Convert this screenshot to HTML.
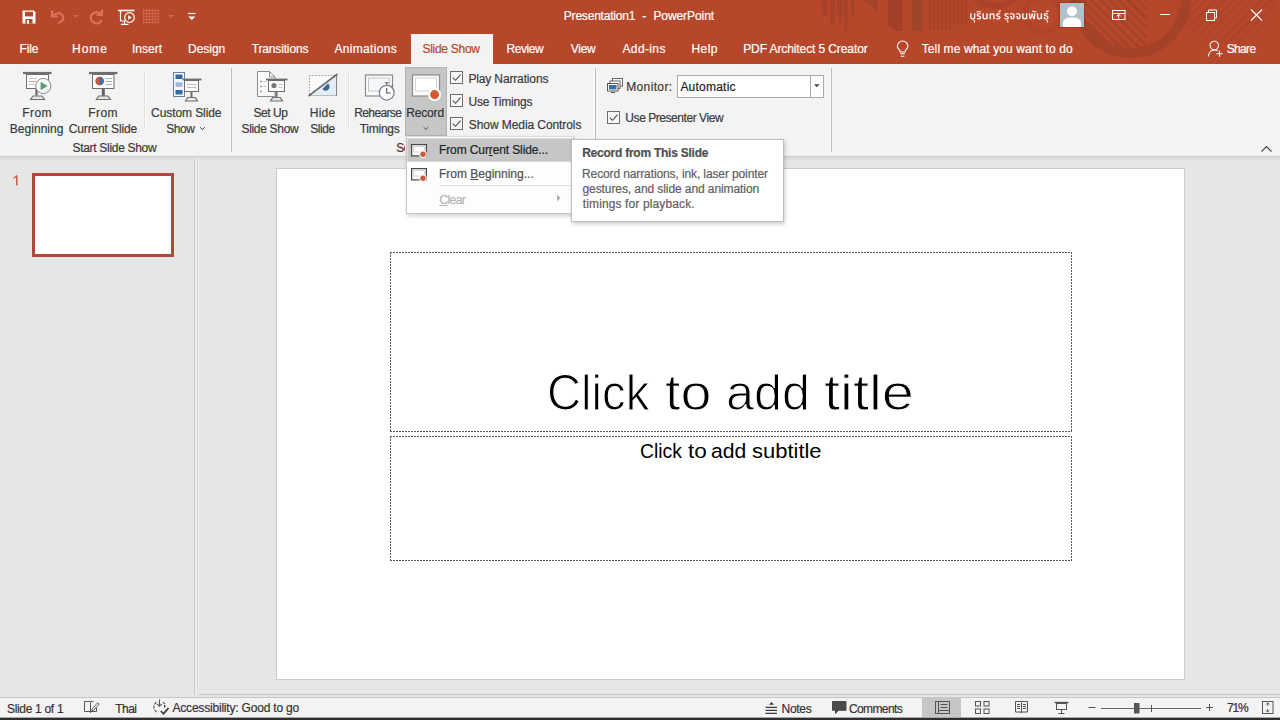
<!DOCTYPE html>
<html><head><meta charset="utf-8"><title>PowerPoint</title>
<style>
html,body{margin:0;padding:0;}
body{width:1280px;height:720px;overflow:hidden;position:relative;background:#e6e6e6;font-family:"Liberation Sans",sans-serif;}
.t{position:absolute;white-space:nowrap;margin:0;padding:0;-webkit-text-stroke:0.2px currentColor;}
.r{position:absolute;}
svg{position:absolute;overflow:visible;}
u{text-decoration:underline;text-underline-offset:1px;}
</style></head>
<body>
<div class="r" style="left:0px;top:0px;width:1280px;height:64px;background:#b7472a;"></div>
<svg style="left:0;top:0" width="1280" height="64" viewBox="0 0 1280 64">
<defs>
<clipPath id="cpA"><rect x="0" y="0" width="1280" height="64"/></clipPath>
<pattern id="dg1" width="6.500" height="6.500" patternUnits="userSpaceOnUse" patternTransform="rotate(45)"><rect x="0" y="0" width="6.500" height="3.200" fill="#a3402a"/></pattern>
<pattern id="dg2" width="6.500" height="6.500" patternUnits="userSpaceOnUse" patternTransform="rotate(-45)"><rect x="0" y="0" width="6.500" height="3.200" fill="#a3402a"/></pattern>
<clipPath id="cpC1"><circle cx="1131" cy="-2" r="50"/></clipPath>
<clipPath id="cpC2"><circle cx="1226" cy="-8" r="52"/></clipPath>
</defs>
<g clip-path="url(#cpA)" fill="#a3402a">
<g opacity="0.800">
<rect x="822" y="0" width="5" height="15"/><rect x="830.500" y="0" width="4" height="24"/><rect x="837" y="0" width="5.500" height="15"/><rect x="839" y="15" width="2" height="9"/><rect x="844" y="0" width="3.500" height="31"/><rect x="851" y="0" width="3" height="15"/>
<polygon points="864,0 878,0 878,12"/>
<polygon points="888,0 902.500,0 902.500,31 896,31 888,25" fill="#9c3e28"/>
<rect x="912" y="0" width="11" height="31" fill="#98452a"/>
<rect x="929" y="0" width="2" height="30"/><rect x="933" y="0" width="2" height="30"/><rect x="937" y="0" width="2" height="30"/><rect x="941" y="0" width="2" height="30"/><rect x="945" y="0" width="2" height="30"/><rect x="949" y="0" width="2" height="30"/><rect x="953" y="0" width="2" height="24"/><rect x="957" y="0" width="2" height="24"/><rect x="961" y="0" width="2" height="24"/><rect x="965" y="0" width="2" height="24"/>
</g>
<circle cx="995" cy="-24" r="30" fill="none" stroke="#a3402a" stroke-width="6" opacity="0.600"/>
<circle cx="1043" cy="14" r="18" fill="none" stroke="#a3402a" stroke-width="6" opacity="0.350"/>
<circle cx="1131" cy="-2" r="55" fill="none" stroke="#9f4129" stroke-width="10" opacity="0.800"/>
<rect x="1080" y="-52" width="67" height="104" fill="url(#dg1)" clip-path="url(#cpC1)" opacity="0.800"/>
<rect x="1174" y="-60" width="104" height="110" fill="url(#dg2)" clip-path="url(#cpC2)" opacity="0.450"/>
</g>
</svg>
<div class="t" style="left:563.82px;top:10px;font-size:12.0px;line-height:12.0px;letter-spacing:-0.207px;color:#fff;">Presentation1</div>
<div class="t" style="left:642.27px;top:10px;font-size:12.0px;line-height:12.0px;letter-spacing:1.070px;color:#fff;">-</div>
<div class="t" style="left:653.42px;top:10px;font-size:12.0px;line-height:12.0px;letter-spacing:-0.077px;color:#fff;">PowerPoint</div>
<svg style="left:0;top:0" width="220" height="32" viewBox="0 0 220 32" fill="none">
<!-- save -->
<path d="M22.5 10.5h11.3l1.7 1.7v11.3h-13z" fill="#fff"/>
<rect x="25" y="11.8" width="8" height="4.6" fill="#b7472a"/>
<rect x="25.5" y="19" width="7" height="4.6" fill="#b7472a"/><rect x="27" y="20" width="2" height="3.6" fill="#fff"/>
<!-- undo (dim) -->
<g stroke="#d9735a" stroke-width="2.200" fill="none" stroke-linejoin="round">
<path d="M52 10.500v6h6" />
<path d="M52.500 16c3-3.400 7.300-3.600 9.500-1.200c2.500 2.800 1.200 6.700-3.500 8.200"/>
</g>
<path d="M72.800 15h5.400l-2.700 3z" fill="#cf6a50"/>
<!-- redo (dim) -->
<g stroke="#d9735a" stroke-width="2.200" fill="none" stroke-linejoin="round">
<path d="M102 9.500v5.500h-5.500"/>
<path d="M101.500 15c-2.200-3.400-7-3.800-9.500-0.700c-2.400 3-1.300 7.300 2.300 8.600c2.900 1 5.800-0.200 7.200-2.900"/>
</g>
<!-- start from beginning -->
<g stroke="#fff" stroke-width="1.2" fill="none">
<path d="M118 10.500h16.500" stroke-width="1.600"/>
<path d="M120.500 11v10h4.500"/>
<path d="M124.500 21v3M121 24.300h7.500" />
<circle cx="129.500" cy="17.500" r="4.800" fill="#b7472a"/>
<path d="M128.200 15.300l3.600 2.200l-3.600 2.200z" fill="#fff" stroke="none"/>
</g>
<!-- grid icon dim -->
<g stroke="#d0694f" stroke-width="1.200" opacity="0.900">
<path d="M143.500 9v14.500M146.500 9v14.500M149.500 9v14.500M152.500 9v14.500M155.500 9v14.500M158.500 9v14.500"/>
<path d="M143 10.500h16M143 13.500h16M143 16.500h16M143 19.500h16M143 22.500h16"/>
</g>
<path d="M168.500 15h5.400l-2.700 3z" fill="#cf6a50"/>
<!-- customize QAT -->
<path d="M188 13.500h7.500" stroke="#fff" stroke-width="1.200"/>
<path d="M188.300 16.500h7l-3.500 3.500z" fill="#fff"/>
</svg>
<svg style="left:0;top:0" width="1280" height="32" viewBox="0 0 1280 32"><path fill="#fff" fill-rule="evenodd" d="M1046.27 20.28L1046.32 21.04L1046.65 20.98L1046.82 21.28L1046.82 22.39L1047.96 22.39L1047.96 20.87L1047.85 20.46L1047.47 20.16L1046.60 20.16ZM1006.62 20.28L1006.73 21.04L1007.01 20.98L1007.17 21.16L1007.17 22.39L1008.32 22.39L1008.32 20.63L1008.15 20.34L1007.83 20.16L1006.95 20.16ZM973.37 20.28L973.42 20.98L973.75 20.98L973.91 21.22L973.91 22.39L975.06 22.39L975.06 20.75L974.95 20.46L974.57 20.16L973.69 20.16ZM1036.88 13.36L1036.88 17.46L1037.04 18.29L1037.37 18.87L1038.02 19.34L1038.52 19.46L1039.33 19.46L1040.15 19.17L1040.64 18.70L1040.70 18.52L1040.92 18.46L1041.03 19.34L1042.06 19.34L1042.06 13.36L1040.70 13.36L1040.64 17.17L1040.32 17.82L1039.61 18.23L1038.84 18.17L1038.57 17.99L1038.30 17.58L1038.24 13.36ZM1028.69 13.36L1029.72 19.34L1031.03 19.28L1031.96 16.12L1032.07 15.29L1032.18 15.18L1032.40 16.41L1033.27 19.34L1034.64 19.28L1035.62 13.36L1034.31 13.42L1033.76 17.41L1033.66 17.29L1033.49 16.41L1032.62 13.36L1031.69 13.36L1030.82 16.41L1030.65 17.29L1030.54 17.41L1030.00 13.36ZM1022.13 13.36L1022.13 17.46L1022.30 18.29L1022.62 18.87L1023.28 19.34L1023.77 19.46L1024.59 19.46L1025.41 19.17L1025.90 18.70L1025.96 18.52L1026.17 18.46L1026.28 19.34L1027.32 19.34L1027.32 13.36L1025.96 13.36L1025.90 17.17L1025.57 17.82L1024.86 18.23L1024.10 18.17L1023.83 17.99L1023.55 17.58L1023.50 13.36ZM982.49 13.36L982.49 17.46L982.65 18.29L982.98 18.87L983.63 19.34L984.13 19.46L984.94 19.46L985.76 19.17L986.25 18.70L986.31 18.52L986.53 18.46L986.64 19.34L987.67 19.34L987.67 13.36L986.31 13.36L986.25 17.17L985.93 17.82L985.22 18.23L984.45 18.17L984.18 17.99L983.91 17.58L983.85 13.36ZM970.20 13.30L970.20 17.46L970.31 17.99L970.58 18.58L971.35 19.22L972.28 19.46L973.64 19.40L974.62 18.93L975.11 18.23L975.33 17.29L975.33 13.30L973.97 13.30L973.97 17.41L973.86 17.76L973.53 18.11L973.15 18.29L972.17 18.23L971.73 17.88L971.57 17.52L971.51 13.30ZM994.01 13.65L993.30 13.30L992.21 13.24L991.28 13.59L990.79 14.24L990.62 14.24L990.46 13.36L989.48 13.36L989.48 19.34L990.84 19.34L990.84 15.76L991.17 14.94L991.55 14.59L991.88 14.47L992.53 14.47L992.92 14.65L993.14 14.88L993.30 15.29L993.30 19.34L994.66 19.34L994.66 15.24L994.50 14.36ZM1044.14 13.59L1043.76 14.00L1043.59 14.47L1043.59 15.06L1043.87 15.65L1044.63 16.12L1046.92 16.82L1047.25 17.29L1047.25 17.76L1046.92 18.23L1046.60 18.40L1046.00 18.46L1045.01 18.29L1044.96 16.70L1043.81 16.70L1043.81 19.05L1045.01 19.40L1046.43 19.46L1047.20 19.34L1047.91 18.99L1048.24 18.64L1048.51 17.93L1048.51 17.05L1048.29 16.47L1047.53 15.82L1045.29 15.12L1044.90 14.71L1045.07 14.41L1045.56 14.24L1046.98 14.30L1048.07 14.65L1048.02 13.48L1046.71 13.18L1045.51 13.18L1044.80 13.30ZM1015.80 13.65L1015.80 14.82L1017.05 14.36L1018.20 14.36L1018.75 14.59L1019.07 14.94L1019.35 15.70L1019.35 16.94L1019.24 17.41L1018.80 18.05L1018.42 18.23L1017.93 18.17L1017.93 15.88L1016.02 15.88L1016.02 16.76L1016.73 16.82L1016.73 19.34L1018.47 19.34L1019.24 19.17L1019.84 18.81L1020.22 18.40L1020.49 17.88L1020.71 16.88L1020.66 15.29L1020.49 14.71L1020.06 13.95L1019.29 13.42L1018.31 13.18L1016.94 13.24ZM1009.79 13.65L1009.79 14.88L1010.12 14.65L1010.77 14.41L1012.19 14.36L1012.74 14.59L1013.12 15.00L1013.34 15.65L1013.40 16.47L1013.29 17.29L1013.07 17.76L1012.79 18.05L1012.41 18.23L1011.98 18.17L1011.98 15.88L1010.06 15.88L1010.06 16.76L1010.72 16.82L1010.72 19.34L1012.85 19.28L1013.50 19.05L1013.83 18.81L1014.27 18.34L1014.54 17.76L1014.71 17.00L1014.65 15.24L1014.49 14.65L1014.16 14.06L1013.45 13.48L1012.30 13.18L1010.94 13.24ZM1005.42 13.36L1004.82 13.71L1004.49 14.18L1004.38 14.53L1004.38 15.24L1004.49 15.59L1004.99 16.17L1007.33 17.23L1007.55 17.52L1007.55 17.88L1007.17 18.23L1006.51 18.34L1005.64 18.23L1004.60 17.82L1004.28 18.81L1004.33 18.99L1005.31 19.34L1006.13 19.46L1007.06 19.46L1007.93 19.22L1008.37 18.93L1008.75 18.40L1008.92 17.52L1008.70 16.76L1008.10 16.17L1005.97 15.29L1005.70 15.00L1005.70 14.71L1005.97 14.41L1006.35 14.30L1007.33 14.30L1008.54 14.65L1008.54 13.53L1008.15 13.36L1007.22 13.18L1006.24 13.18ZM996.96 13.42L996.63 13.59L996.25 14.00L996.08 14.36L996.03 15.18L996.25 15.76L996.74 16.23L998.98 17.23L999.20 17.46L999.20 17.93L998.71 18.29L998.16 18.34L997.56 18.29L996.25 17.88L995.98 18.99L996.96 19.34L997.78 19.46L998.71 19.46L999.47 19.28L999.96 18.99L1000.45 18.29L1000.56 17.35L1000.40 16.82L999.74 16.17L997.61 15.29L997.40 15.06L997.34 14.77L997.61 14.41L998.00 14.30L998.98 14.30L1000.18 14.65L1000.18 13.53L998.92 13.18L997.89 13.18ZM977.63 13.42L977.30 13.59L976.92 14.00L976.75 14.36L976.70 15.18L976.92 15.76L977.41 16.23L979.65 17.23L979.87 17.46L979.87 17.93L979.37 18.29L978.83 18.34L978.23 18.29L976.92 17.88L976.64 18.99L977.63 19.34L978.45 19.46L979.37 19.46L980.14 19.28L980.63 18.99L981.12 18.29L981.23 17.35L981.07 16.82L980.41 16.17L978.28 15.29L978.06 15.06L978.01 14.77L978.28 14.41L978.66 14.30L979.65 14.30L980.85 14.65L980.85 13.53L979.59 13.18L978.56 13.18ZM976.26 11.66L976.26 12.24L981.07 12.24L981.07 11.19L977.19 11.19ZM1048.95 10.60L1047.25 10.60L1046.54 10.84L1046.21 11.36L1046.21 12.07L1046.38 12.54L1047.42 12.30L1047.36 11.89L1047.63 11.60L1048.95 11.60ZM1001.00 10.60L999.31 10.60L998.71 10.78L998.38 11.13L998.27 11.72L998.49 12.54L999.52 12.24L999.47 11.83L999.74 11.60L1001.05 11.60ZM1032.51 10.60L1032.40 11.13L1032.45 11.54L1032.73 11.95L1033.11 12.19L1036.44 12.24L1036.44 11.31L1033.93 11.31L1033.55 11.01L1033.60 10.60L1032.67 10.43Z"/></svg>
<div class="r" style="left:1059px;top:2px;width:26px;height:26px;background:rgba(120,40,20,0.350);"></div>
<div class="r" style="left:1060px;top:3px;width:24px;height:24px;background:#b0c1cb;"></div>
<svg style="left:1060px;top:3px" width="24" height="24" viewBox="0 0 24 24"><circle cx="12" cy="8.300" r="5" fill="#fff"/><path d="M3 24v-4c0-3.800 3-5.600 9-5.600s9 1.800 9 5.600v4z" fill="#fff"/></svg>
<svg style="left:1100px;top:0" width="180" height="32" viewBox="1100 0 180 32" fill="none" stroke="#fff" stroke-width="1">
<rect x="1112.500" y="10.500" width="12.500" height="9"/><path d="M1112.500 13.500h12.500"/><path d="M1118.700 18.500v-4M1116.700 16.300l2-2l2 2"/>
<path d="M1160 14.500h10"/>
<rect x="1206.500" y="12.500" width="8" height="8"/><path d="M1208.500 12.500v-2.500h8v8h-2"/>
<path d="M1251 9.500l11 11M1262 9.500l-11 11" stroke-width="1.100"/>
</svg>
<div class="t" style="left:19.52px;top:43px;font-size:12.0px;line-height:12.0px;letter-spacing:-0.106px;color:#fff;">File</div>
<div class="t" style="left:72.02px;top:43px;font-size:12.0px;line-height:12.0px;letter-spacing:1.003px;color:#fff;">Home</div>
<div class="t" style="left:131.89px;top:43px;font-size:12.0px;line-height:12.0px;letter-spacing:0.037px;color:#fff;">Insert</div>
<div class="t" style="left:188.02px;top:43px;font-size:12.0px;line-height:12.0px;letter-spacing:-0.018px;color:#fff;">Design</div>
<div class="t" style="left:251.73px;top:43px;font-size:12.0px;line-height:12.0px;letter-spacing:-0.154px;color:#fff;">Transitions</div>
<div class="t" style="left:334.48px;top:43px;font-size:12.0px;line-height:12.0px;letter-spacing:0.311px;color:#fff;">Animations</div>
<div class="r" style="left:411px;top:34px;width:82px;height:30px;background:#f3f3f3;"></div>
<div class="t" style="left:422.46px;top:43px;font-size:12.0px;line-height:12.0px;letter-spacing:-0.280px;color:#b7472a;">Slide Show</div>
<div class="t" style="left:506.52px;top:43px;font-size:12.0px;line-height:12.0px;letter-spacing:-0.418px;color:#fff;">Review</div>
<div class="t" style="left:570.75px;top:43px;font-size:12.0px;line-height:12.0px;letter-spacing:-0.257px;color:#fff;">View</div>
<div class="t" style="left:622.48px;top:43px;font-size:12.0px;line-height:12.0px;letter-spacing:0.378px;color:#fff;">Add-ins</div>
<div class="t" style="left:691.52px;top:43px;font-size:12.0px;line-height:12.0px;letter-spacing:0.436px;color:#fff;">Help</div>
<div class="t" style="left:743.22px;top:43px;font-size:12.0px;line-height:12.0px;letter-spacing:-0.101px;color:#fff;">PDF Architect 5 Creator</div>
<div class="t" style="left:921.73px;top:43px;font-size:12.0px;line-height:12.0px;letter-spacing:0.111px;color:#fff;">Tell me what you want to do</div>
<div class="t" style="left:1226.76px;top:43px;font-size:12.0px;line-height:12.0px;letter-spacing:-0.661px;color:#fff;">Share</div>
<svg style="left:890px;top:32px" width="40" height="32" viewBox="890 32 40 32" fill="none" stroke="#fff" stroke-width="1.100">
<path d="M900.300 52c0-2.200-3-3-3-5.700a5.300 5.300 0 0 1 10.600 0c0 2.700-3 3.500-3 5.700z"/>
<path d="M900.300 53.800h4.600M900.800 56.300h3.600"/>
</svg>
<svg style="left:1200px;top:32px" width="30" height="32" viewBox="1200 32 30 32" fill="none" stroke="#fff" stroke-width="1.100">
<circle cx="1214.300" cy="45.400" r="4.200"/>
<path d="M1208.400 56.500c0.200-3.800 2.600-6.600 6-6.600c1.300 0 2.400 0.300 3.400 0.900"/>
<path d="M1219.500 50.800v6M1216.500 53.800h6"/>
</svg>
<div class="r" style="left:0px;top:64px;width:1280px;height:92px;background:#f3f3f3;"></div>
<div class="r" style="left:0px;top:155px;width:1280px;height:1px;background:#ececec;"></div>
<div class="r" style="left:0px;top:156px;width:1280px;height:2px;background:#d5d5d5;"></div>
<div class="r" style="left:0px;top:158px;width:1280px;height:1px;background:#e3e3e3;"></div>
<div class="r" style="left:144px;top:72px;width:1px;height:56px;background:#e0e0e0;"></div>
<div class="r" style="left:145px;top:72px;width:1px;height:56px;background:#fbfbfb;"></div>
<div class="r" style="left:348px;top:72px;width:1px;height:56px;background:#e0e0e0;"></div>
<div class="r" style="left:349px;top:72px;width:1px;height:56px;background:#fbfbfb;"></div>
<div class="r" style="left:230px;top:68px;width:1px;height:84px;background:#fafafa;"></div>
<div class="r" style="left:231px;top:68px;width:1px;height:84px;background:#bdbdbd;"></div>
<div class="r" style="left:594px;top:68px;width:1px;height:84px;background:#fafafa;"></div>
<div class="r" style="left:595px;top:68px;width:1px;height:84px;background:#bdbdbd;"></div>
<div class="r" style="left:830px;top:68px;width:1px;height:84px;background:#fafafa;"></div>
<div class="r" style="left:831px;top:68px;width:1px;height:84px;background:#bdbdbd;"></div>
<div class="t" style="left:22.32px;top:107px;font-size:12.0px;line-height:12.0px;letter-spacing:0.393px;color:#3a3a3a;">From</div>
<div class="t" style="left:9.72px;top:123px;font-size:12.0px;line-height:12.0px;letter-spacing:0.047px;color:#3a3a3a;">Beginning</div>
<div class="t" style="left:88.32px;top:107px;font-size:12.0px;line-height:12.0px;letter-spacing:0.393px;color:#3a3a3a;">From</div>
<div class="t" style="left:68.69px;top:123px;font-size:12.0px;line-height:12.0px;letter-spacing:-0.124px;color:#3a3a3a;">Current Slide</div>
<div class="t" style="left:151.09px;top:107px;font-size:12.0px;line-height:12.0px;letter-spacing:-0.084px;color:#3a3a3a;">Custom Slide</div>
<div class="t" style="left:166.16px;top:123px;font-size:12.0px;line-height:12.0px;letter-spacing:-0.401px;color:#3a3a3a;">Show</div>
<div class="t" style="left:72.46px;top:142px;font-size:12.0px;line-height:12.0px;letter-spacing:-0.300px;color:#3a3a3a;">Start Slide Show</div>
<div class="t" style="left:253.46px;top:107px;font-size:12.0px;line-height:12.0px;letter-spacing:-0.467px;color:#3a3a3a;">Set Up</div>
<div class="t" style="left:241.46px;top:123px;font-size:12.0px;line-height:12.0px;letter-spacing:-0.313px;color:#3a3a3a;">Slide Show</div>
<div class="t" style="left:309.72px;top:107px;font-size:12.0px;line-height:12.0px;letter-spacing:0.279px;color:#3a3a3a;">Hide</div>
<div class="t" style="left:310.16px;top:123px;font-size:12.0px;line-height:12.0px;letter-spacing:-0.401px;color:#3a3a3a;">Slide</div>
<div class="t" style="left:354.32px;top:107px;font-size:12.0px;line-height:12.0px;letter-spacing:-0.645px;color:#3a3a3a;">Rehearse</div>
<div class="t" style="left:359.73px;top:123px;font-size:12.0px;line-height:12.0px;letter-spacing:-0.260px;color:#3a3a3a;">Timings</div>
<div class="t" style="left:396.16px;top:142px;font-size:12.0px;line-height:12.0px;letter-spacing:-0.467px;color:#3a3a3a;width:9px;overflow:hidden;">Set Up</div>
<div class="r" style="left:405px;top:67px;width:42px;height:69px;background:#c6c6c6;box-sizing:border-box;border:1px solid #b4b4b4;"></div>
<div class="t" style="left:406.32px;top:107px;font-size:12.0px;line-height:12.0px;letter-spacing:-0.185px;color:#333;">Record</div>
<svg style="left:0;top:64px" width="1280" height="92" viewBox="0 64 1280 92" fill="none" stroke="#666" stroke-width="1">
<path d="M200 127.200l2.400 2.300l2.400-2.300" stroke="#444"/>
<path d="M423.600 127.200l2.400 2.300l2.400-2.300" stroke="#555"/>
<path d="M1261.500 151.500l5-5l5 5" stroke="#444" stroke-width="1.100"/>
</svg>
<svg style="left:450px;top:71px" width="13" height="13" viewBox="0 0 13 13"><rect x="0.500" y="0.500" width="12" height="12" fill="#f7f7f7" stroke="#6e6e6e" stroke-width="1"/><path d="M2.800 6.600l2.700 2.700l5-5.600" fill="none" stroke="#4a4a4a" stroke-width="1.050"/></svg>
<svg style="left:450px;top:94px" width="13" height="13" viewBox="0 0 13 13"><rect x="0.500" y="0.500" width="12" height="12" fill="#f7f7f7" stroke="#6e6e6e" stroke-width="1"/><path d="M2.800 6.600l2.700 2.700l5-5.600" fill="none" stroke="#4a4a4a" stroke-width="1.050"/></svg>
<svg style="left:450px;top:117px" width="13" height="13" viewBox="0 0 13 13"><rect x="0.500" y="0.500" width="12" height="12" fill="#f7f7f7" stroke="#6e6e6e" stroke-width="1"/><path d="M2.800 6.600l2.700 2.700l5-5.600" fill="none" stroke="#4a4a4a" stroke-width="1.050"/></svg>
<div class="t" style="left:468.42px;top:73px;font-size:12.0px;line-height:12.0px;letter-spacing:-0.144px;color:#3a3a3a;">Play Narrations</div>
<div class="t" style="left:468.47px;top:96px;font-size:12.0px;line-height:12.0px;letter-spacing:-0.206px;color:#3a3a3a;">Use Timings</div>
<div class="t" style="left:468.86px;top:119px;font-size:12.0px;line-height:12.0px;letter-spacing:-0.082px;color:#3a3a3a;">Show Media Controls</div>
<svg style="left:607px;top:110.5px" width="13" height="13" viewBox="0 0 13 13"><rect x="0.500" y="0.500" width="12" height="12" fill="#f7f7f7" stroke="#6e6e6e" stroke-width="1"/><path d="M2.800 6.600l2.700 2.700l5-5.600" fill="none" stroke="#4a4a4a" stroke-width="1.050"/></svg>
<div class="t" style="left:625.37px;top:112px;font-size:12.0px;line-height:12.0px;letter-spacing:-0.449px;color:#3a3a3a;">Use Presenter View</div>
<div class="t" style="left:626.22px;top:81px;font-size:12.0px;line-height:12.0px;letter-spacing:0.362px;color:#3a3a3a;">Monitor:</div>
<div class="r" style="left:677px;top:75px;width:147px;height:23px;background:#fff;box-sizing:border-box;border:1px solid #ababab;"></div>
<div class="r" style="left:810px;top:76px;width:1px;height:21px;background:#ababab;"></div>
<svg style="left:812px;top:82px" width="10" height="8" viewBox="0 0 10 8"><path d="M2 2.200h5.600l-2.800 3z" fill="#444"/></svg>
<div class="t" style="left:680.38px;top:81px;font-size:12.0px;line-height:12.0px;letter-spacing:0.223px;color:#222;">Automatic</div>
<svg style="left:606px;top:77px" width="18" height="17" viewBox="0 0 18 17" fill="none">
<rect x="6.500" y="1.500" width="10" height="7.500" fill="#fff" stroke="#666"/>
<rect x="4" y="4" width="10" height="7.500" fill="#fff" stroke="#666"/>
<rect x="1.500" y="6.500" width="10.500" height="7.500" fill="#fff" stroke="#555"/>
<rect x="3" y="8" width="7.500" height="4.500" fill="#3a6ea5"/>
<path d="M5 15.500h4" stroke="#555"/>
</svg>
<svg style="left:20px;top:68px" width="36" height="36" viewBox="20 68 36 36" fill="none">
<rect x="26.500" y="74.500" width="22" height="14" fill="#fcfcfc" stroke="#6e6e6e"/>
<path d="M23 73h28.500" stroke="#6e6e6e" stroke-width="2.200"/>
<path d="M29 78.500h8M29 84.500h5" stroke="#c9c9c9" stroke-width="1"/><path d="M29 81.500h7" stroke="#d9a090" stroke-width="1"/>
<path d="M36.500 89v6.500" stroke="#6e6e6e" stroke-width="2.400"/>
<path d="M30.500 99.500l2.500-3.500h9l2.500 3.500z" fill="#e8e8e8" stroke="#6e6e6e" stroke-width="1.200"/>
<circle cx="43.300" cy="86" r="7.600" fill="#f4f8f6" stroke="#8a8a8a" stroke-width="1"/>
<path d="M40.600 81.700l7 4.300l-7 4.300z" fill="#5a9b7b"/>
</svg>
<svg style="left:86px;top:68px" width="36" height="36" viewBox="86 68 36 36" fill="none">
<rect x="92.500" y="74.500" width="21.500" height="14" fill="#fcfcfc" stroke="#6e6e6e"/>
<path d="M89 73h28.500" stroke="#6e6e6e" stroke-width="2.200"/>
<circle cx="99.600" cy="81" r="4.300" fill="#c9553a"/>
<path d="M99.600 81v-4.300a4.300 4.300 0 0 1 0 8.600z" fill="#3f6fa8"/>
<path d="M105.500 78.500h6.500" stroke="#8fc0b0" stroke-width="1"/><path d="M105.500 81.500h6.500" stroke="#d9a090" stroke-width="1"/><path d="M105.500 84.500h6.500" stroke="#9db3d6" stroke-width="1"/>
<path d="M103.300 89v7" stroke="#666" stroke-width="3"/>
<path d="M96.300 99.500l2.500-3.500h9l2.500 3.500z" fill="#e8e8e8" stroke="#6e6e6e" stroke-width="1.200"/>
</svg>
<svg style="left:170px;top:68px" width="36" height="36" viewBox="170 68 36 36" fill="none">
<rect x="173.500" y="72.500" width="11" height="24" fill="#f4f7fb" stroke="#6b7f99"/>
<rect x="175.500" y="74.500" width="7" height="4.500" fill="#2f6aa3"/>
<rect x="175.500" y="82.300" width="7" height="4.500" fill="#9db8d6"/>
<rect x="175.500" y="90" width="7" height="4.500" fill="#2f6aa3"/>
<rect x="184.500" y="80.500" width="14" height="11" fill="#fcfcfc" stroke="#6e6e6e"/>
<path d="M182.500 79.500h19" stroke="#6e6e6e" stroke-width="1.800"/>
<path d="M187 84.500h9M187 87.500h9" stroke="#bbb" stroke-width="1"/>
<path d="M191.500 92v5" stroke="#6e6e6e" stroke-width="2"/>
<path d="M185.500 101l2.300-3.500h7.400l2.300 3.500z" fill="#e8e8e8" stroke="#6e6e6e" stroke-width="1.200"/>
</svg>
<svg style="left:254px;top:68px" width="36" height="36" viewBox="254 68 36 36" fill="none">
<path d="M257.500 71.500h12l5.500 5.500v19.500h-17.500z" fill="#fafafa" stroke="#8a8a8a"/>
<path d="M269.500 71.500v5.500h5.500" stroke="#8a8a8a"/>
<path d="M260 81.500h2M260 86.500h2M260 91.500h2" stroke="#9a9a9a" stroke-width="1.600"/>
<path d="M263.500 81.500h3M263.500 86.500h3" stroke="#c4c4c4"/>
<rect x="268.500" y="80.500" width="16" height="11" fill="#fcfcfc" stroke="#6e6e6e"/>
<path d="M266 79.500h21.500" stroke="#6e6e6e" stroke-width="1.800"/>
<circle cx="274" cy="85.500" r="2.600" fill="#777"/>
<path d="M278.500 84.500h4M278.500 87.500h4" stroke="#c4c4c4"/>
<path d="M276.500 92v5" stroke="#6e6e6e" stroke-width="2"/>
<path d="M270.500 101l2.300-3.500h7.400l2.300 3.500z" fill="#e8e8e8" stroke="#6e6e6e" stroke-width="1.200"/>
</svg>
<svg style="left:306px;top:70px" width="34" height="30" viewBox="306 70 34 30" fill="none">
<rect x="309.500" y="75.500" width="27" height="20" fill="#f9fbfd" stroke="#9a9a9a" stroke-dasharray="1.500 1.500"/>
<path d="M336.500 75v20.500h-27.500" stroke="#8a8a8a" stroke-width="1.200"/>
<path d="M336 76.500v19h-25z" fill="#e3edf5"/><path d="M328 83.500a4 4 0 1 1-5.600 5.600z" fill="#3a6794"/>
<path d="M308.500 96l29-22" stroke="#6e6e6e" stroke-width="1.700"/>
</svg>
<svg style="left:362px;top:70px" width="36" height="34" viewBox="362 70 36 34" fill="none">
<rect x="365.500" y="75" width="27" height="21" fill="#fbfbfb" stroke="#8a8a8a" stroke-width="1.200"/>
<rect x="368.500" y="78" width="21" height="13" fill="#f4f6fa" stroke="#c4c4c4" stroke-width="1"/>
<circle cx="386.700" cy="92.700" r="7.400" fill="#fbfbfd" stroke="#7b7f9a" stroke-width="1.200"/>
<path d="M386.700 85v-2M384.700 82.700h4M391.500 86.500l1.300-1.300" stroke="#666" stroke-width="1.100"/>
<path d="M386.700 88v5h4" stroke="#555" stroke-width="1.100"/>
</svg>
<svg style="left:408px;top:70px" width="36" height="34" viewBox="408 70 36 34" fill="none">
<rect x="412.500" y="75" width="27" height="21" fill="#fdfdfd" stroke="#8a8a8a" stroke-width="1.200"/>
<rect x="415.500" y="78" width="21" height="13" fill="#fff" stroke="#d4d4d4" stroke-width="1"/>
<circle cx="434.600" cy="94.600" r="6.600" fill="#fff"/>
<circle cx="434.600" cy="94.600" r="4.500" fill="#d35a33"/>
</svg>
<div class="r" style="left:0px;top:159px;width:1280px;height:539px;background:#e6e6e6;"></div>
<div class="r" style="left:0px;top:159px;width:1280px;height:1px;background:#dcdcdc;"></div>
<div class="r" style="left:1187px;top:168px;width:1px;height:512px;background:#ececec;"></div>
<div class="r" style="left:1190px;top:168px;width:2px;height:512px;background:#ebebeb;"></div>
<div class="r" style="left:194px;top:159px;width:1px;height:536px;background:#c8c8c8;"></div>
<div class="r" style="left:195px;top:159px;width:2px;height:536px;background:#efefef;"></div>
<div class="r" style="left:197px;top:159px;width:1px;height:536px;background:#d6d6d6;"></div>
<div class="r" style="left:198px;top:159px;width:1px;height:536px;background:#f1f1f1;"></div>
<div class="r" style="left:199px;top:689px;width:1081px;height:1px;background:#dcdcdc;"></div>
<div class="r" style="left:199px;top:690px;width:1081px;height:1px;background:#f0f0f0;"></div>
<div class="r" style="left:199px;top:694px;width:1081px;height:1px;background:#c8c8c8;"></div>
<svg style="left:10px;top:172px" width="12" height="16" viewBox="10 172 12 16"><path d="M13.600 177.600l2.800-2.300h1.100v10.300h-1.400v-8.600l-2.500 1.900z" fill="#c4533a"/></svg>
<div class="r" style="left:32px;top:173px;width:142px;height:84px;background:#fff;box-sizing:border-box;border:3px solid #b4473a;"></div>
<div class="r" style="left:277px;top:169px;width:907px;height:510px;background:#fff;box-shadow:0 0 0 1px #cdcdcd;"></div>
<div class="r" style="left:390px;top:252px;width:682px;height:1px;background:none;background:repeating-linear-gradient(90deg,#5a5a5a 0,#5a5a5a 2px,transparent 2px,transparent 3px);"></div>
<div class="r" style="left:390px;top:431px;width:682px;height:1px;background:none;background:repeating-linear-gradient(90deg,#5a5a5a 0,#5a5a5a 2px,transparent 2px,transparent 3px);"></div>
<div class="r" style="left:390px;top:252px;width:1px;height:180px;background:none;background:repeating-linear-gradient(180deg,#5a5a5a 0,#5a5a5a 2px,transparent 2px,transparent 3px);"></div>
<div class="r" style="left:1071px;top:252px;width:1px;height:180px;background:none;background:repeating-linear-gradient(180deg,#5a5a5a 0,#5a5a5a 2px,transparent 2px,transparent 3px);"></div>
<div class="r" style="left:390px;top:436px;width:682px;height:1px;background:none;background:repeating-linear-gradient(90deg,#5a5a5a 0,#5a5a5a 2px,transparent 2px,transparent 3px);"></div>
<div class="r" style="left:390px;top:560px;width:682px;height:1px;background:none;background:repeating-linear-gradient(90deg,#5a5a5a 0,#5a5a5a 2px,transparent 2px,transparent 3px);"></div>
<div class="r" style="left:390px;top:436px;width:1px;height:125px;background:none;background:repeating-linear-gradient(180deg,#5a5a5a 0,#5a5a5a 2px,transparent 2px,transparent 3px);"></div>
<div class="r" style="left:1071px;top:436px;width:1px;height:125px;background:none;background:repeating-linear-gradient(180deg,#5a5a5a 0,#5a5a5a 2px,transparent 2px,transparent 3px);"></div>
<div class="t" style="left:547.00px;top:368px;font-size:50.5px;line-height:50.5px;letter-spacing:0.000px;color:#000;-webkit-text-stroke:1.100px #fff;transform:scaleX(0.9353);transform-origin:0 0;">Click</div>
<div class="t" style="left:665.46px;top:368px;font-size:50.5px;line-height:50.5px;letter-spacing:0.000px;color:#000;-webkit-text-stroke:1.100px #fff;transform:scaleX(1.1012);transform-origin:0 0;">to</div>
<div class="t" style="left:725.66px;top:368px;font-size:50.5px;line-height:50.5px;letter-spacing:0.000px;color:#000;-webkit-text-stroke:1.100px #fff;transform:scaleX(0.9967);transform-origin:0 0;">add</div>
<div class="t" style="left:823.52px;top:368px;font-size:50.5px;line-height:50.5px;letter-spacing:0.000px;color:#000;-webkit-text-stroke:1.100px #fff;transform:scaleX(1.1458);transform-origin:0 0;">title</div>
<div class="t" style="left:639.62px;top:441px;font-size:20.5px;line-height:20.5px;letter-spacing:0.000px;color:#000;-webkit-text-stroke:0;transform:scaleX(0.9446);transform-origin:0 0;">Click</div>
<div class="t" style="left:688.26px;top:441px;font-size:20.5px;line-height:20.5px;letter-spacing:0.000px;color:#000;-webkit-text-stroke:0;transform:scaleX(1.0989);transform-origin:0 0;">to</div>
<div class="t" style="left:711.40px;top:441px;font-size:20.5px;line-height:20.5px;letter-spacing:0.000px;color:#000;-webkit-text-stroke:0;transform:scaleX(1.0309);transform-origin:0 0;">add</div>
<div class="t" style="left:751.69px;top:441px;font-size:20.5px;line-height:20.5px;letter-spacing:0.000px;color:#000;-webkit-text-stroke:0;transform:scaleX(1.0713);transform-origin:0 0;">subtitle</div>
<div class="r" style="left:0px;top:697px;width:1280px;height:1px;background:#c6c6c6;"></div>
<div class="r" style="left:0px;top:698px;width:1280px;height:20px;background:#f3f3f3;"></div>
<div class="r" style="left:0px;top:717px;width:1280px;height:1px;background:#a8a8a8;"></div>
<div class="r" style="left:0px;top:718px;width:1280px;height:2px;background:#2e2e2e;"></div>
<div class="t" style="left:6.96px;top:703px;font-size:12.0px;line-height:12.0px;letter-spacing:-0.310px;color:#333;">Slide 1 of 1</div>
<div class="t" style="left:115.33px;top:703px;font-size:12.0px;line-height:12.0px;letter-spacing:-0.555px;color:#333;">Thai</div>
<div class="t" style="left:172.48px;top:702px;font-size:12.0px;line-height:12.0px;letter-spacing:-0.195px;color:#333;">Accessibility: Good to go</div>
<div class="t" style="left:781.52px;top:703px;font-size:12.0px;line-height:12.0px;letter-spacing:-0.282px;color:#333;">Notes</div>
<div class="t" style="left:848.89px;top:703px;font-size:12.0px;line-height:12.0px;letter-spacing:-0.596px;color:#333;">Comments</div>
<div class="t" style="left:1226.88px;top:702px;font-size:12.0px;line-height:12.0px;letter-spacing:-1.087px;color:#333;">71%</div>
<div class="r" style="left:922px;top:698px;width:39px;height:19px;background:#c6c6c6;"></div>
<svg style="left:0;top:697px" width="1280" height="21" viewBox="0 697 1280 21" fill="none" stroke="#555" stroke-width="1">
<!-- spell/book icon -->
<path d="M84.500 701.500h5.500l0.500 0.800l0.500-0.800h2.500M84.500 701.500v10h5.500l0.500 1.200l0.500-1.200h5.500v-3.500M90.500 702.500v10"/>
<path d="M92.300 708.800l5.300-6l1.500 1.300l-5.300 6l-2.100 0.800z" fill="#f3f3f3" stroke-width="0.900"/>
<!-- accessibility icon -->
<path d="M159.500 699.500v6.500M157 703.800l2.500 2.500l2.500-2.500" stroke-width="1.100"/>
<path d="M156.500 702.200a5.800 5.800 0 0 0 0.500 10M162.800 702.300a5.800 5.800 0 0 1 2.600 2.600" stroke-dasharray="3 1.200" stroke-width="1.100"/>
<path d="M164 704.500l2 1.700l-2 1.700z" fill="#444" stroke="none"/>
<path d="M160.800 711l2.700 2.700l5-5.600" stroke="#3a3a3a" stroke-width="1.700"/>
<!-- notes icon -->
<path d="M765.500 707.300h11.500M765.500 710.300h11.500M765.500 713.300h11.500" stroke="#3c3c3c" stroke-width="1.200"/>
<path d="M769 704.800l2.500-2.800l2.500 2.800z" fill="#3c3c3c" stroke="none"/>
<!-- comments icon -->
<path d="M832.500 701.500h13.500v8.800h-7.500l-3 3.200v-3.200h-3z" fill="#4a4a4a" stroke="#4a4a4a"/>
<!-- normal view -->
<rect x="935.500" y="701.500" width="14" height="12"/><path d="M938.500 701.500v12M938.500 710.500h11M940.500 704.500h7M940.500 707.500h7"/>
<!-- slide sorter -->
<rect x="975.500" y="701.500" width="5" height="4.500"/><rect x="984" y="701.500" width="5" height="4.500"/><rect x="975.500" y="709" width="5" height="4.500"/><rect x="984" y="709" width="5" height="4.500"/>
<!-- reading view -->
<path d="M1015.500 701.500h5.500l0.500 1l0.500-1h5.500v10.500h-5.500l-0.500 1l-0.500-1h-5.500z"/><path d="M1021.500 702.500v10M1017 704.500h3M1017 706.500h3M1017 708.500h3M1023 704.500h3M1023 706.500h3M1023 708.500h3" />
<!-- slideshow -->
<path d="M1054.500 702.500h14" stroke-width="1.400"/><rect x="1056.500" y="703.500" width="10" height="6"/><path d="M1061.500 709.500v3.500M1058.500 713.500h6"/>
<!-- zoom slider -->
<path d="M1088.500 707.500h7"/>
<path d="M1101 708.500h100" stroke="#666"/>
<path d="M1151.500 705v7"/>
<rect x="1134" y="703" width="5.500" height="10.500" fill="#555" stroke="none"/>
<path d="M1206 707.500h7M1209.500 704v7"/>
<!-- fit -->
<rect x="1262.500" y="701.500" width="10.500" height="12"/>
<path d="M1267.700 703v3M1266 704.500l1.700-1.700l1.700 1.700M1267.700 712v-3M1266 710.500l1.700 1.700l1.700-1.700" stroke-width="0.900"/>
</svg>
<div class="r" style="left:406px;top:136px;width:168px;height:78px;background:#fdfdfd;box-sizing:border-box;border:1px solid #c6c6c6;border-top-color:#dcdcdc;box-shadow:1px 2px 4px rgba(0,0,0,0.180);"></div>
<svg style="left:407px;top:136px" width="166" height="30" viewBox="0 0 166 30"><rect x="0.400" y="2.400" width="166" height="23.300" fill="#c6c6c6"/></svg>
<svg style="left:411px;top:143.5px" width="18" height="15" viewBox="0 0 18 15" fill="none">
<rect x="0.600" y="0.600" width="14.800" height="11.300" fill="#fdfdfd" stroke="#484848" stroke-width="1.200"/>
<rect x="2.500" y="2.500" width="11" height="5.500" fill="none" stroke="#d6d6d6" stroke-width="1"/>
<circle cx="12" cy="10.200" r="3.800" fill="#fdfdfd"/>
<circle cx="12" cy="10.200" r="2.700" fill="#cf5a36"/>
</svg>
<svg style="left:411px;top:167.5px" width="18" height="15" viewBox="0 0 18 15" fill="none">
<rect x="0.600" y="0.600" width="14.800" height="11.300" fill="#fdfdfd" stroke="#484848" stroke-width="1.200"/>
<rect x="2.500" y="2.500" width="11" height="5.500" fill="none" stroke="#d6d6d6" stroke-width="1"/>
<circle cx="12" cy="10.200" r="3.800" fill="#fdfdfd"/>
<circle cx="12" cy="10.200" r="2.700" fill="#cf5a36"/>
</svg>
<div class="t" style="left:439.02px;top:144px;font-size:12.0px;line-height:12.0px;letter-spacing:-0.114px;color:#222;">From Cur<u>r</u>ent Slide...</div>
<div class="t" style="left:439.02px;top:168px;font-size:12.0px;line-height:12.0px;letter-spacing:-0.002px;color:#505050;">From <u>B</u>eginning...</div>
<div class="r" style="left:439px;top:185px;width:134px;height:1px;background:#e1e1e1;"></div>
<div class="t" style="left:439.39px;top:194px;font-size:12.0px;line-height:12.0px;letter-spacing:-0.567px;color:#b4b4b4;"><u>C</u>lear</div>
<svg style="left:555px;top:193.300px" width="8" height="10" viewBox="0 0 8 10"><path d="M2 1.500l3.600 3.500l-3.600 3.500z" fill="#b0b0b0"/></svg>
<div class="r" style="left:570.5px;top:138.5px;width:213.5px;height:83.5px;background:#fff;box-sizing:border-box;border:1px solid #bebebe;box-shadow:1px 2px 4px rgba(0,0,0,0.200);"></div>
<div class="t" style="left:582.20px;top:147px;font-size:12.0px;line-height:12.0px;letter-spacing:-0.245px;color:#505050;font-weight:bold;">Record from This Slide</div>
<div class="t" style="left:582.02px;top:168px;font-size:12.0px;line-height:12.0px;letter-spacing:-0.114px;color:#5e5e5e;">Record narrations, ink, laser pointer</div>
<div class="t" style="left:582.50px;top:183px;font-size:12.0px;line-height:12.0px;letter-spacing:-0.086px;color:#5e5e5e;">gestures, and slide and animation</div>
<div class="t" style="left:582.82px;top:198px;font-size:12.0px;line-height:12.0px;letter-spacing:0.120px;color:#5e5e5e;">timings for playback.</div>
</body></html>
